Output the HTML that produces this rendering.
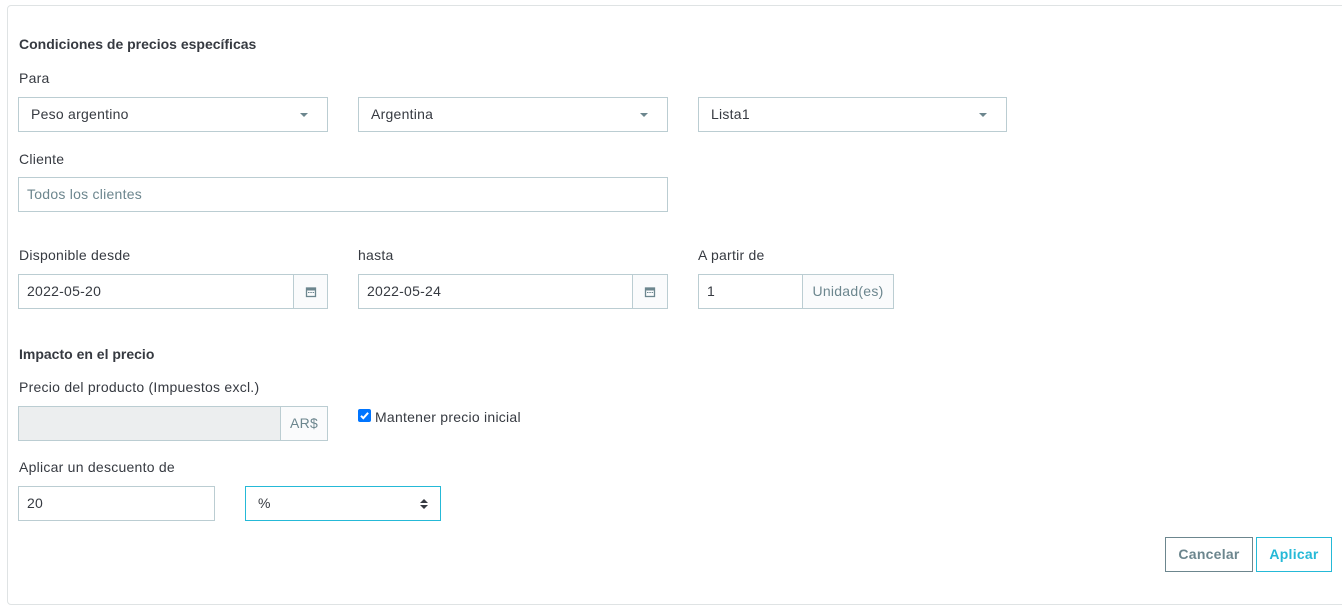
<!DOCTYPE html>
<html><head><meta charset="utf-8"><style>
*{box-sizing:border-box;margin:0;padding:0}
body{width:1342px;height:602px;background:#fff;font-family:"Liberation Sans",sans-serif;font-size:14px;color:#363a41;position:relative;overflow:hidden;letter-spacing:0.25px}
.card{position:absolute;left:7px;top:5px;width:1345px;height:600px;border:1px solid #dfe3e4;border-radius:4px}
.a{position:absolute;white-space:nowrap}
.lbl{line-height:20px}
.b{font-weight:bold;letter-spacing:0}
.box{position:absolute;border:1px solid #bbcdd2;background:#fff;height:35px;line-height:33px}
.caret{position:absolute;width:0;height:0;border-left:4px solid transparent;border-right:4px solid transparent;border-top:4px solid #6c868e;top:15px}
.add{position:absolute;top:0;bottom:0;background:#fafbfc;border-left:1px solid #bbcdd2;color:#6c868e;text-align:center}
.btn{position:absolute;height:35px;line-height:33px;text-align:center;font-weight:bold;background:#fff}
</style></head><body>
<div class="card"></div>
<div class="a lbl b" style="left:19px;top:34px">Condiciones de precios específicas</div>
<div class="a lbl" style="left:19px;top:68px">Para</div>
<div class="box" style="left:18px;top:97px;width:310px"><span class="a" style="left:12px">Peso argentino</span><i class="caret" style="left:281px"></i></div>
<div class="box" style="left:358px;top:97px;width:310px"><span class="a" style="left:12px">Argentina</span><i class="caret" style="left:281px"></i></div>
<div class="box" style="left:698px;top:97px;width:309px"><span class="a" style="left:12px">Lista1</span><i class="caret" style="left:280px"></i></div>
<div class="a lbl" style="left:19px;top:149px">Cliente</div>
<div class="box" style="left:18px;top:177px;width:650px;color:#6c868e"><span class="a" style="left:8px">Todos los clientes</span></div>
<div class="a lbl" style="left:19px;top:245px">Disponible desde</div>
<div class="a lbl" style="left:358px;top:245px">hasta</div>
<div class="a lbl" style="left:698px;top:245px">A partir de</div>
<div class="box" style="left:18px;top:274px;width:310px"><span class="a" style="left:8px">2022-05-20</span><div class="add" style="left:274px;width:34px"><svg width="12" height="12" viewBox="0 0 12 12" style="margin-top:11px"><rect x="1.5" y="2" width="9" height="8.5" fill="none" stroke="#6c868e" stroke-width="1.3"/><rect x="1.5" y="2" width="9" height="2.5" fill="#6c868e"/><rect x="3" y="6" width="1.5" height="1" fill="#6c868e"/><rect x="5.3" y="6" width="1.5" height="1" fill="#6c868e"/><rect x="7.6" y="6" width="1.5" height="1" fill="#6c868e"/></svg></div></div>
<div class="box" style="left:358px;top:274px;width:310px"><span class="a" style="left:8px">2022-05-24</span><div class="add" style="left:273px;width:35px"><svg width="12" height="12" viewBox="0 0 12 12" style="margin-top:11px"><rect x="1.5" y="2" width="9" height="8.5" fill="none" stroke="#6c868e" stroke-width="1.3"/><rect x="1.5" y="2" width="9" height="2.5" fill="#6c868e"/><rect x="3" y="6" width="1.5" height="1" fill="#6c868e"/><rect x="5.3" y="6" width="1.5" height="1" fill="#6c868e"/><rect x="7.6" y="6" width="1.5" height="1" fill="#6c868e"/></svg></div></div>
<div class="box" style="left:698px;top:274px;width:196px"><span class="a" style="left:8px">1</span><div class="add" style="left:103px;width:91px">Unidad(es)</div></div>
<div class="a lbl b" style="left:19px;top:344px">Impacto en el precio</div>
<div class="a lbl" style="left:19px;top:377px">Precio del producto (Impuestos excl.)</div>
<div class="box" style="left:18px;top:406px;width:310px;background:#eceeef"><div class="add" style="left:261px;width:47px">AR$</div></div>
<div class="a" style="left:358px;top:409px;width:13px;height:13px;background:#0075ff;border-radius:2px"><svg width="13" height="13" viewBox="0 0 13 13"><path d="M3 6.8l2.3 2.4 4.8-5.4" fill="none" stroke="#fff" stroke-width="2"/></svg></div>
<div class="a lbl" style="left:375px;top:407px">Mantener precio inicial</div>
<div class="a lbl" style="left:19px;top:457px">Aplicar un descuento de</div>
<div class="box" style="left:18px;top:486px;width:197px"><span class="a" style="left:8px">20</span></div>
<div class="box" style="left:245px;top:486px;width:196px;border-color:#25b9d7"><span class="a" style="left:12px">%</span><svg class="a" style="left:174px;top:11px" width="8" height="12" viewBox="0 0 8 12"><path d="M0 5L4 1 8 5zM0 7L4 11 8 7z" fill="#363a41"/></svg></div>
<div class="btn" style="left:1165px;top:537px;width:88px;border:1px solid #6c868e;color:#6c868e">Cancelar</div>
<div class="btn" style="left:1256px;top:537px;width:76px;border:1px solid #25b9d7;color:#25b9d7">Aplicar</div>
</body></html>
